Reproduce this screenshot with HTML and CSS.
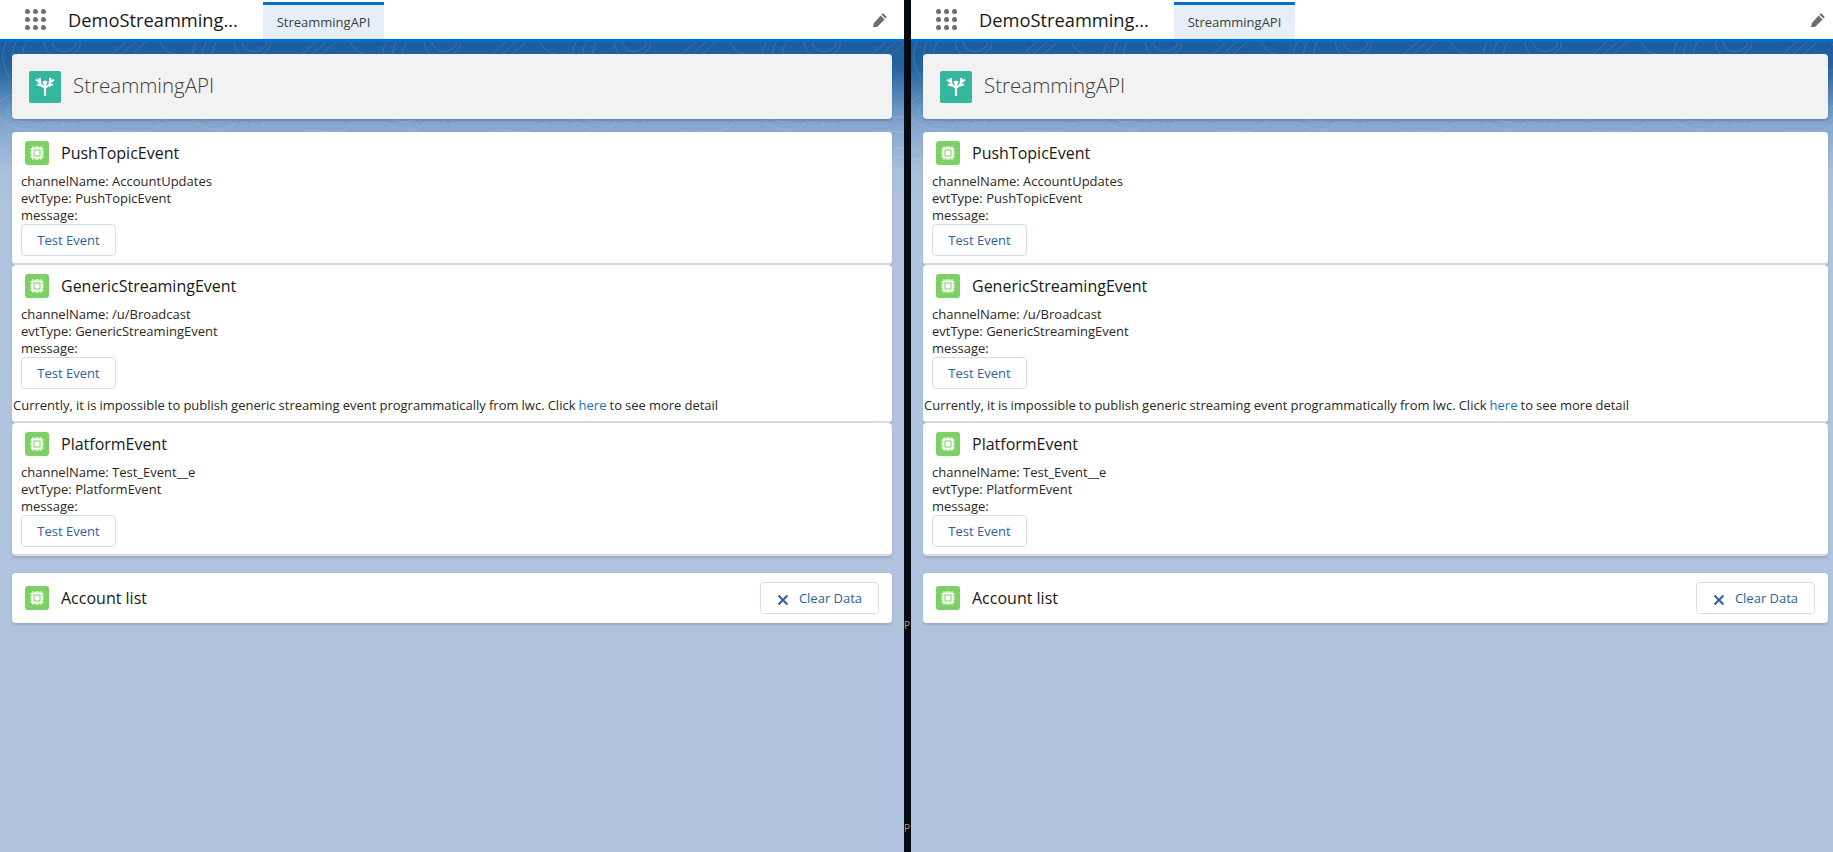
FILE: index.html
```html
<!DOCTYPE html>
<html lang="en">
<head>
  <meta charset="UTF-8">
  <title>StreammingAPI</title>
  <link rel="stylesheet" href="styles.css">
</head>
<body>
  <svg class="defs" width="0" height="0">
    <defs>
      <pattern id="contours" width="190" height="165" patternUnits="userSpaceOnUse">
        <g fill="none" stroke="#fff" stroke-opacity=".13">
          <path d="M6 0c-6 12-4 22 4 36M16 0c-6 12-4 22 4 36M26 0c-6 12-4 22 4 36"/>
          <path d="M44 0c2 14 14 22 26 14s10-10 10-14M52 0c2 8 10 12 18 8s6-6 6-8"/>
          <path d="M96 36c4-14 16-24 30-36M106 36c4-14 16-24 30-36M116 36c4-14 16-24 30-36"/>
          <path d="M150 36c10-12 26-10 40-20M160 0c6 12 16 14 30 12"/>
          <path d="M0 60c14-12 30-12 42-2s6 30-12 30-40-14-30-28z"/>
          <path d="M10 64c10-6 18-6 24 0s2 16-8 16-24-8-16-16z"/>
          <path d="M62 84c10-20 10-30 26-46M72 84c10-20 10-30 26-46"/>
          <path d="M108 80c14-16 34 4 48-10s14-20 34-22M108 92c16-10 34 6 52-8s12-16 30-18"/>
          <path d="M0 120c24-14 44 12 70 4s30-14 48-10M0 134c24-14 44 12 70 4s30-14 48-10"/>
          <path d="M126 112c10-10 26-8 30 4s-10 22-20 18-18-14-10-22z"/>
          <path d="M134 118c5-5 14-4 16 2s-5 10-10 8-10-6-6-10z"/>
          <path d="M166 120c6 14 0 30 10 45M178 112c6 14 2 36 10 53"/>
          <path d="M30 165c8-12 10-18 22-24M44 165c8-12 10-18 22-24M90 165c6-10 14-16 26-18"/>
        </g>
      </pattern>
    </defs>
  </svg>

  <section class="pane pane-left">
    <div class="backdrop"><svg width="100%" height="100%"><rect width="100%" height="100%" fill="url(#contours)"/></svg></div>
    <header class="topbar">
      <span class="waffle"><i></i><i></i><i></i><i></i><i></i><i></i><i></i><i></i><i></i></span>
      <span class="app-name">DemoStreamming...</span>
      <span class="tab">StreammingAPI</span>
      <svg class="pencil" viewBox="0 0 14 14"><path d="M10.4.6l3 3c.3.3.3.7 0 1l-1 1-4-4 1-1c.3-.3.7-.3 1 0zM7.6 2.4l4 4-7.3 7.3-3.6.7c-.4.1-.7-.2-.6-.6l.7-3.6z"/></svg>
    </header>
    <main class="content">
      <div class="page-head">
        <svg class="head-icon" viewBox="0 0 32 32"><use href="#tree-shape"/></svg>
        <h1 class="head-title">StreammingAPI</h1>
      </div>

      <div class="stack">
        <article class="card">
          <div class="card-head"><svg class="chip" viewBox="0 0 24 24"><use href="#chip-shape"/></svg><h2>PushTopicEvent</h2></div>
          <div class="card-body">
            <div>channelName: AccountUpdates</div>
            <div>evtType: PushTopicEvent</div>
            <div>message:</div>
            <button class="btn">Test Event</button>
          </div>
        </article>
        <article class="card">
          <div class="card-head"><svg class="chip" viewBox="0 0 24 24"><use href="#chip-shape"/></svg><h2>GenericStreamingEvent</h2></div>
          <div class="card-body">
            <div>channelName: /u/Broadcast</div>
            <div>evtType: GenericStreamingEvent</div>
            <div>message:</div>
            <button class="btn">Test Event</button>
          </div>
          <p class="note">Currently, it is impossible to publish generic streaming event programmatically from lwc. Click <a href="#">here</a> to see more detail</p>
        </article>
        <article class="card">
          <div class="card-head"><svg class="chip" viewBox="0 0 24 24"><use href="#chip-shape"/></svg><h2>PlatformEvent</h2></div>
          <div class="card-body">
            <div>channelName: Test_Event__e</div>
            <div>evtType: PlatformEvent</div>
            <div>message:</div>
            <button class="btn">Test Event</button>
          </div>
        </article>
      </div>

      <div class="card list-card">
        <svg class="chip" viewBox="0 0 24 24"><use href="#chip-shape"/></svg>
        <h2>Account list</h2>
        <button class="btn btn-clear"><svg class="x" viewBox="0 0 12 12"><path d="M1.500 1.500l9 9M10.500 1.500l-9 9"/></svg>Clear Data</button>
      </div>
    </main>
  </section>

  <div class="divider">
    <span class="stray stray-a">P</span>
    <span class="stray stray-b">P</span>
  </div>

  <section class="pane pane-right">
    <div class="backdrop"><svg width="100%" height="100%"><rect width="100%" height="100%" fill="url(#contours)"/></svg></div>
    <header class="topbar">
      <span class="waffle"><i></i><i></i><i></i><i></i><i></i><i></i><i></i><i></i><i></i></span>
      <span class="app-name">DemoStreamming...</span>
      <span class="tab">StreammingAPI</span>
      <svg class="pencil" viewBox="0 0 14 14"><path d="M10.4.6l3 3c.3.3.3.7 0 1l-1 1-4-4 1-1c.3-.3.7-.3 1 0zM7.6 2.4l4 4-7.3 7.3-3.6.7c-.4.1-.7-.2-.6-.6l.7-3.6z"/></svg>
    </header>
    <main class="content">
      <div class="page-head">
        <svg class="head-icon" viewBox="0 0 32 32"><use href="#tree-shape"/></svg>
        <h1 class="head-title">StreammingAPI</h1>
      </div>

      <div class="stack">
        <article class="card">
          <div class="card-head"><svg class="chip" viewBox="0 0 24 24"><use href="#chip-shape"/></svg><h2>PushTopicEvent</h2></div>
          <div class="card-body">
            <div>channelName: AccountUpdates</div>
            <div>evtType: PushTopicEvent</div>
            <div>message:</div>
            <button class="btn">Test Event</button>
          </div>
        </article>
        <article class="card">
          <div class="card-head"><svg class="chip" viewBox="0 0 24 24"><use href="#chip-shape"/></svg><h2>GenericStreamingEvent</h2></div>
          <div class="card-body">
            <div>channelName: /u/Broadcast</div>
            <div>evtType: GenericStreamingEvent</div>
            <div>message:</div>
            <button class="btn">Test Event</button>
          </div>
          <p class="note">Currently, it is impossible to publish generic streaming event programmatically from lwc. Click <a href="#">here</a> to see more detail</p>
        </article>
        <article class="card">
          <div class="card-head"><svg class="chip" viewBox="0 0 24 24"><use href="#chip-shape"/></svg><h2>PlatformEvent</h2></div>
          <div class="card-body">
            <div>channelName: Test_Event__e</div>
            <div>evtType: PlatformEvent</div>
            <div>message:</div>
            <button class="btn">Test Event</button>
          </div>
        </article>
      </div>

      <div class="card list-card">
        <svg class="chip" viewBox="0 0 24 24"><use href="#chip-shape"/></svg>
        <h2>Account list</h2>
        <button class="btn btn-clear"><svg class="x" viewBox="0 0 12 12"><path d="M1.500 1.500l9 9M10.500 1.500l-9 9"/></svg>Clear Data</button>
      </div>
    </main>
  </section>

  <svg class="defs" width="0" height="0">
    <defs>
      <g id="chip-shape">
        <rect width="24" height="24" rx="3" fill="#7dd064"/>
        <path d="M5 8h2M5 11h2M5 13h2M5 16h2M17 8h2M17 11h2M17 13h2M17 16h2M8 5v2M11 5v2M13 5v2M16 5v2M8 17v2M11 17v2M13 17v2M16 17v2" stroke="#e6f6df" stroke-width="1.200"/>
        <rect x="6.500" y="6.500" width="11" height="11" rx="1" fill="#fff"/>
        <rect x="8.500" y="8.500" width="7" height="7" fill="#7dd064"/>
        <rect x="9.500" y="9.500" width="5" height="5" fill="#fff"/>
      </g>
      <g id="tree-shape">
        <rect width="32" height="32" rx="2" fill="#34b79c"/>
        <path d="M16 25V13M16 17l-4.500-3.500L10.500 7M16 17l4.500-3.500L21.500 7M11.500 12L7 8.500M20.500 12L25 8.500M8 13.500l4 1M24 13.500l-4 1M16 14l-1.500-4M16 14l1.500-4" fill="none" stroke="#fff" stroke-width="2.200"/>
      </g>
    </defs>
  </svg>
</body>
</html>
```

FILE: styles.css
```css
* {
  box-sizing: border-box;
}
html, body {
  height: 100%;
}
body {
  margin: 0;
  display: flex;
  overflow: hidden;
  background-color: #b0c4df;
  font-family: "Open Sans", sans-serif;
  font-size: 13px;
  color: #2b2826;
}
.defs {
  position: absolute;
}

/* panes */
.pane {
  position: relative;
  height: 852px;
  background: linear-gradient(#1b5c9e 42px, #24649f 68px, #85a6d0 125px, #a8bedb 170px, #b0c4df 210px);
}
.pane-left {
  width: 904px;
  --edge: 12px;
  --pencil-edge: 17px;
}
.pane-right {
  flex: 1;
  --edge: 5px;
  --pencil-edge: 8px;
}
.backdrop {
  position: absolute;
  top: 42px;
  left: 0;
  right: 0;
  height: 165px;
  -webkit-mask-image: linear-gradient(#000 70%, transparent);
  mask-image: linear-gradient(#000 70%, transparent);
}
.backdrop svg {
  display: block;
}
.divider {
  position: relative;
  width: 7px;
  background-color: #050b14;
}
.stray {
  position: absolute;
  left: 0;
  font-size: 10px;
  line-height: 10px;
  color: #c9914f;
}
.stray-a {
  top: 620px;
}
.stray-b {
  top: 823px;
}

/* top bar */
.topbar {
  position: relative;
  display: flex;
  align-items: center;
  height: 42px;
  padding-left: 25px;
  padding-right: var(--pencil-edge);
  background-color: #fff;
  border-bottom: 3px solid #0070d2;
}
.waffle {
  display: grid;
  grid-template-columns: repeat(3, 5px);
  gap: 3px;
  width: 21px;
}
.waffle i {
  width: 5px;
  height: 5px;
  border-radius: 50%;
  background-color: #706e6b;
}
.app-name {
  width: 195px;
  margin-left: 22px;
  font-size: 18.3px;
  color: #181818;
  white-space: nowrap;
}
.tab {
  display: flex;
  align-items: center;
  justify-content: center;
  align-self: flex-end;
  width: 121px;
  height: 37px;
  background-color: #e6eff8;
  border-top: 3px solid #0070d2;
  color: #3e3e3c;
}
.pencil {
  width: 14px;
  height: 14px;
  margin-left: auto;
  fill: #706e6b;
}

/* content */
.content {
  position: relative;
  padding: 12px var(--edge) 0 12px;
}
.page-head {
  display: flex;
  align-items: center;
  gap: 12px;
  height: 65px;
  padding-left: 17px;
  margin-bottom: 13px;
  background-color: #f3f2f2;
  border-radius: 4px;
  box-shadow: 0 2px 2px rgba(0, 0, 0, 0.15);
}
.head-icon {
  width: 32px;
  height: 32px;
}
.head-title {
  margin: 0 0 4px;
  font-size: 20.5px;
  font-weight: 300;
  color: #3e3e3c;
}
.card {
  background-color: #fff;
  border-radius: 4px;
  box-shadow: 0 2px 2px rgba(0, 0, 0, 0.12);
}
.stack .card {
  border-bottom: 2px solid #dddbda;
}
.card-head {
  display: flex;
  align-items: center;
  gap: 12px;
  padding: 9px 13px 0;
}
.chip {
  flex: none;
  width: 24px;
  height: 24px;
}
h2 {
  margin: 0;
  font-size: 16px;
  font-weight: 400;
  color: #181818;
}
.card-body {
  padding: 8px 9px 7px;
  line-height: 17px;
}
.btn {
  display: block;
  width: 95px;
  height: 32px;
  padding: 0;
  background-color: #fff;
  border: 1px solid #d8dde6;
  border-radius: 4px;
  font-family: inherit;
  font-size: 13px;
  color: #2f5f9e;
}
.note {
  margin: 0;
  padding: 0 1px 7px;
  line-height: 18px;
  word-spacing: -0.3px;
}
.note a {
  color: #1b6fc0;
  text-decoration: none;
}
.list-card {
  display: flex;
  align-items: center;
  gap: 12px;
  height: 50px;
  margin-top: 17px;
  padding: 0 13px;
}
.btn-clear {
  display: flex;
  align-items: center;
  justify-content: center;
  gap: 10px;
  width: 119px;
  margin: 0 0 0 auto;
}
.x {
  width: 12px;
  height: 12px;
  margin-top: 4px;
  fill: none;
  stroke: #2f5f9e;
  stroke-width: 2;
}
```
